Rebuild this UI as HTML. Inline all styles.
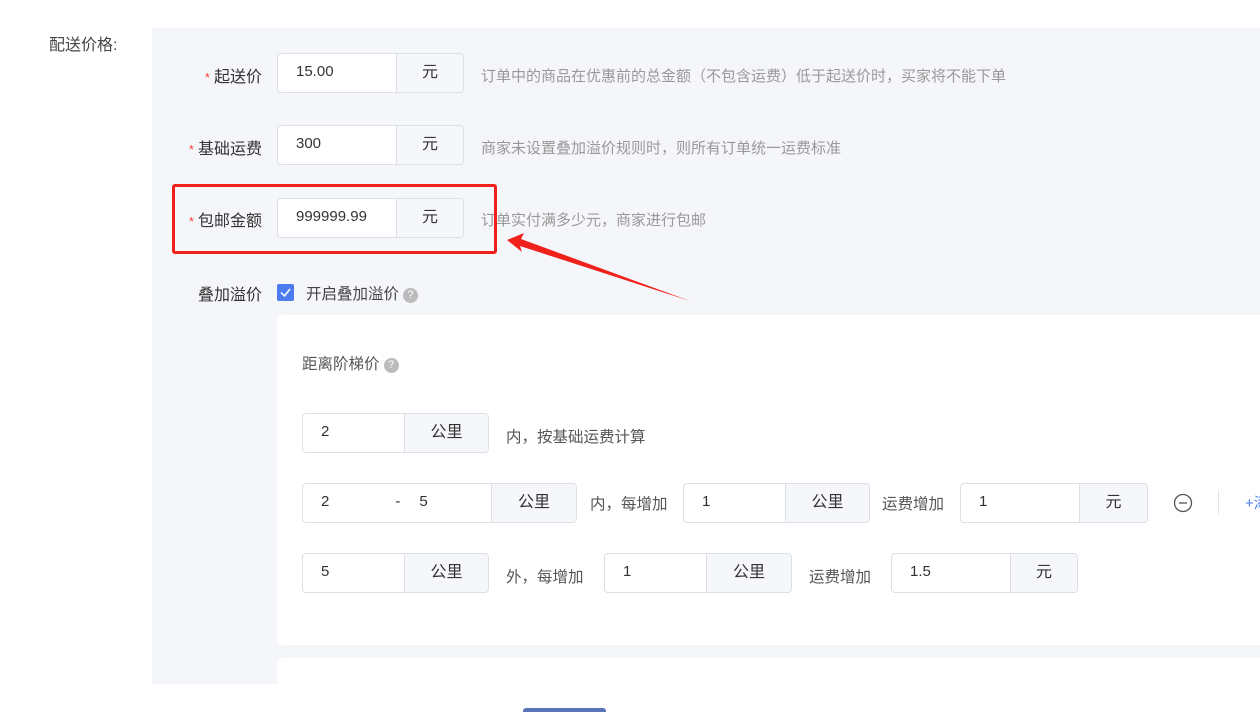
<!DOCTYPE html>
<html><head><meta charset="utf-8"><style>
body{margin:0;width:1260px;height:710px;overflow:hidden;background:#fff;font-family:"Liberation Sans","Noto Sans CJK SC",sans-serif;position:relative;color:#333}
.a{position:absolute}
.lbl{position:absolute;font-size:16px;color:#333;text-align:right;width:110px}
.lbl b{color:#f04040;font-weight:normal;margin-right:4px;font-size:13px}
.inp{position:absolute;height:40px;border:1px solid #dcdfe6;border-radius:4px;background:#fff;box-sizing:border-box;display:flex;font-size:15px;overflow:hidden}
.inp .v{flex:1;padding-left:18px;line-height:36px;color:#333}
.inp .u{background:#f5f7fa;border-left:1px solid #dcdfe6;text-align:center;line-height:38px;font-size:16px}
.hint{position:absolute;font-size:15px;color:#999}
.t{position:absolute;font-size:15.5px;color:#555}
.q{display:inline-block;width:15px;height:15px;border-radius:50%;background:#bbb;color:#fff;font-size:11px;line-height:15px;text-align:center;vertical-align:1px;margin-left:4px}
</style></head><body>
<div class="a" style="left:49px;top:31px;font-size:16px;color:#444">配送价格:</div>
<div class="a" style="left:152px;top:28px;width:1108px;height:656px;background:#f5f6fa"></div>
<div class="a" style="left:277px;top:315px;width:983px;height:330px;background:#fff;border-radius:6px 0 0 6px"></div>
<div class="a" style="left:277px;top:658px;width:983px;height:52px;background:#fff;border-radius:6px 0 0 0"></div>

<div class="lbl" style="left:152px;top:63px"><b>*</b>起送价</div>
<div class="inp" style="left:277px;top:53px;width:187px"><div class="v">15.00</div><div class="u" style="width:66px">元</div></div>
<div class="hint" style="left:481px;top:65px">订单中的商品在优惠前的总金额（不包含运费）低于起送价时，买家将不能下单</div>

<div class="lbl" style="left:152px;top:135px"><b>*</b>基础运费</div>
<div class="inp" style="left:277px;top:125px;width:187px"><div class="v">300</div><div class="u" style="width:66px">元</div></div>
<div class="hint" style="left:481px;top:137px">商家未设置叠加溢价规则时，则所有订单统一运费标准</div>

<div class="lbl" style="left:152px;top:207px"><b>*</b>包邮金额</div>
<div class="inp" style="left:277px;top:198px;width:187px"><div class="v">999999.99</div><div class="u" style="width:66px">元</div></div>
<div class="hint" style="left:481px;top:209px">订单实付满多少元，商家进行包邮</div>
<div class="a" style="left:172px;top:184px;width:319px;height:64px;border:3px solid #f0201a;border-radius:3px"></div>
<svg class="a" style="left:500px;top:225px" width="200" height="85"><path d="M7 15 L24 8 L21 14 L190 76 L20 21 L22 27 Z" fill="#f0201a"/></svg>

<div class="lbl" style="left:152px;top:281px">叠加溢价</div>
<div class="a" style="left:277px;top:284px;width:17px;height:17px;background:#4c7cf0;border-radius:2px"><svg width="17" height="17"><path d="M4 8.5 L7.5 12 L13 5" stroke="#fff" stroke-width="1.5" fill="none"/></svg></div>
<div class="t" style="left:306px;top:282px;color:#444">开启叠加溢价<span class="q">?</span></div>

<div class="t" style="left:302px;top:352px">距离阶梯价<span class="q">?</span></div>

<div class="inp" style="left:302px;top:413px;width:187px"><div class="v">2</div><div class="u" style="width:83px">公里</div></div>
<div class="t" style="left:506px;top:425px">内，按基础运费计算</div>

<div class="inp" style="left:302px;top:483px;width:275px"><div class="v">2<span style="margin-left:66px">-</span><span style="margin-left:19px">5</span></div><div class="u" style="width:84px">公里</div></div>
<div class="t" style="left:590px;top:492px">内，每增加</div>
<div class="inp" style="left:683px;top:483px;width:187px"><div class="v">1</div><div class="u" style="width:83px">公里</div></div>
<div class="t" style="left:882px;top:492px">运费增加</div>
<div class="inp" style="left:960px;top:483px;width:188px"><div class="v">1</div><div class="u" style="width:67px">元</div></div>
<svg class="a" style="left:1172px;top:492px" width="22" height="22"><circle cx="11" cy="11" r="8.5" stroke="#555" stroke-width="1.3" fill="none"/><path d="M7 11 H15" stroke="#555" stroke-width="1.3"/></svg>
<div class="a" style="left:1218px;top:490px;width:1px;height:24px;background:#e5e5e5"></div>
<div class="a" style="left:1245px;top:492px;font-size:15px;color:#4c7cf0">+添</div>

<div class="inp" style="left:302px;top:553px;width:187px"><div class="v">5</div><div class="u" style="width:83px">公里</div></div>
<div class="t" style="left:506px;top:565px">外，每增加</div>
<div class="inp" style="left:604px;top:553px;width:188px"><div class="v">1</div><div class="u" style="width:84px">公里</div></div>
<div class="t" style="left:809px;top:565px">运费增加</div>
<div class="inp" style="left:891px;top:553px;width:187px"><div class="v">1.5</div><div class="u" style="width:66px">元</div></div>

<div class="a" style="left:523px;top:708px;width:83px;height:4px;background:#5a74b8;border-radius:3px 3px 0 0"></div>
</body></html>
